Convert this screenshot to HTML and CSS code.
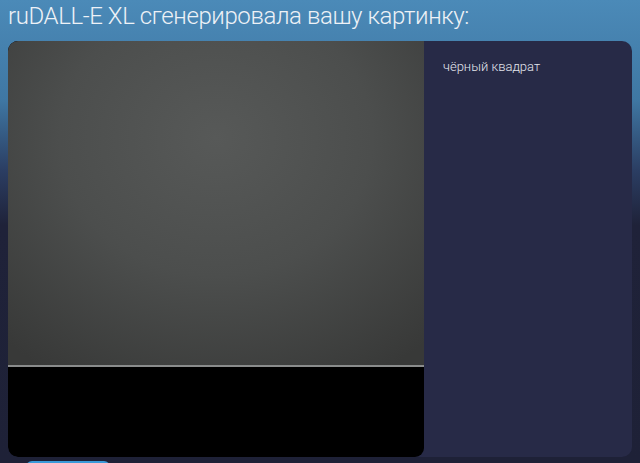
FILE: index.html
```html
<!DOCTYPE html>
<html lang="ru">
<head>
<meta charset="utf-8">
<link rel="stylesheet" href="styles.css">
</head>
<body>
<div class="page">
  <h1 class="title">ruDALL-E XL сгенерировала вашу картинку:</h1>
  <div class="card">
    <div class="picture">
      <div class="picture-img"></div>
      <div class="picture-bottom"></div>
    </div>
    <div class="info">
      <p class="prompt">чёрный квадрат</p>
    </div>
  </div>
  <div class="actions">
    <button class="btn"></button>
  </div>
</div>
</body>
</html>
```
FILE: styles.css
```css
html, body {
  margin: 0;
  padding: 0;
  height: 100%;
  overflow: hidden;
}
body {
  background: linear-gradient(180deg, #4b8ab8 0px, #3f77a3 100px, #2b3e63 170px, #1f2239 225px, #1e2137 463px);
  font-family: Roboto, "Noto Sans", sans-serif;
}
.page {
  padding: 0 8px;
}
.title {
  margin: 0;
  padding-top: 1px;
  height: 40px;
  font-size: 24px;
  line-height: 31px;
  font-weight: 300;
  color: #eef2f7;
  letter-spacing: -0.4px;
  white-space: nowrap;
}
.card {
  display: flex;
  height: 416px;
  background: #272a47;
  border-radius: 10px;
  overflow: hidden;
}
.picture {
  width: 416px;
  display: flex;
  flex-direction: column;
  background: #000;
  border-radius: 0 0 9px 9px;
}
.picture-img {
  height: 324px;
  background: radial-gradient(ellipse 75% 85% at 50% 30%, #575958 0%, #4c4e4d 50%, #383938 100%);
  border-bottom: 2px solid #8a8c8c;
}
.picture-bottom {
  flex: 1;
}
.info {
  flex: 1;
  padding: 17px 19px;
}
.prompt {
  margin: 0;
  font-size: 13px;
  line-height: 17px;
  font-weight: 300;
  color: #e4e6ee;
}
.actions {
  padding: 4px 0 0 18px;
}
.btn {
  width: 84px;
  height: 30px;
  border: 0;
  border-radius: 6px;
  background: #3a9ad9;
}
```
